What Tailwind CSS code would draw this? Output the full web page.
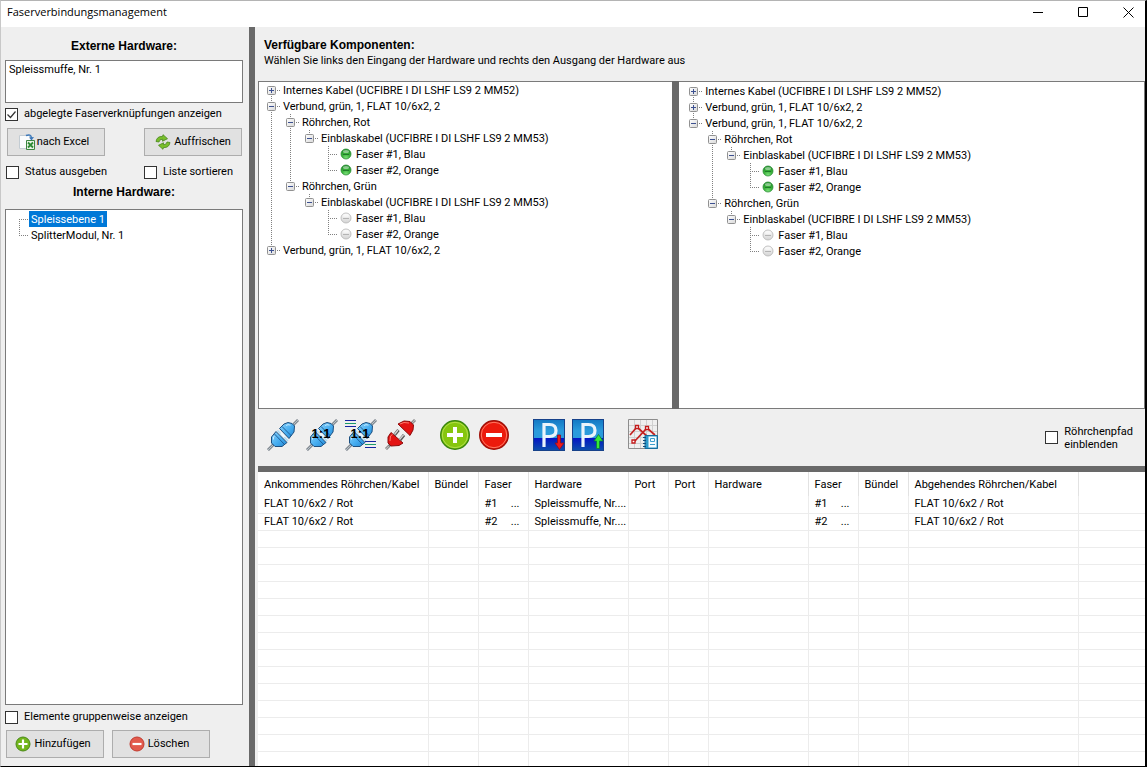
<!DOCTYPE html>
<html lang="de">
<head>
<meta charset="utf-8">
<title>Faserverbindungsmanagement</title>
<script src="https://cdn.jsdelivr.net/npm/@tailwindcss/browser@4"></script>
</head>
<body class="flex h-screen flex-col overflow-hidden border-t border-r-2 border-b border-l border-t-[#b4b4b4] border-r-black border-b-black border-l-[#c8c8c8] bg-[#efefef] font-[Roboto,'Liberation_Sans',sans-serif] text-[11px] leading-4 text-black">

<svg class="absolute size-0" aria-hidden="true">
  <defs>
    <linearGradient id="blue" x1="0" y1="0" x2="1" y2="1"><stop offset="0" stop-color="#8fd4fa"/><stop offset=".55" stop-color="#46adf0"/><stop offset="1" stop-color="#2287d3"/></linearGradient>
    <linearGradient id="sky" x1="0" y1="0" x2="0" y2="1"><stop offset="0" stop-color="#1479c4"/><stop offset=".6" stop-color="#2a9bdc"/></linearGradient>
    <linearGradient id="deep" x1="0" y1="0" x2="0" y2="1"><stop offset="0" stop-color="#0414c4"/><stop offset="1" stop-color="#0b4fae"/></linearGradient>
    <radialGradient id="ballgreen" cx=".5" cy=".9" r=".9"><stop offset="0" stop-color="#7be07b"/><stop offset=".5" stop-color="#37b037"/><stop offset="1" stop-color="#1f8a2c"/></radialGradient>
    <linearGradient id="ballgray" x1="0" y1="0" x2="0" y2="1"><stop offset="0" stop-color="#fafafa"/><stop offset="1" stop-color="#d4d4d4"/></linearGradient>
    <linearGradient id="boxfill" x1="0" y1="0" x2="1" y2="1"><stop offset="0" stop-color="#fff"/><stop offset="1" stop-color="#d8d8d8"/></linearGradient>
    <symbol id="plug" viewBox="0 0 32 32">
      <path d="M24 8 31 1M1 31l7-7" stroke="#5d6670" stroke-width="2.6"/><path d="M26 6l5-5M1 31l5-5" stroke="#b9c2c8" stroke-width="1.2"/>
      <path d="M12.500 9.500 17 5l4-1.500 4 1L27.500 7l-.5 6L22 19.500z" fill="url(#blue)" stroke="#1c4f80"/>
      <path d="M9 12.500 20 23.500 15 27.500l-7 0L4.500 24l0-6z" fill="url(#blue)" stroke="#1c4f80"/>
      <path d="m10.500 11.500 10.500 10.500" stroke="#a9dcf8" stroke-width="1.500"/>
      <path d="m15 7.500 9.500 9.500M7.500 15l9.500 10" stroke="#1d5f9b"/>
      <path d="m14 14 3.500 4" stroke="#eef7fc" stroke-width="2"/>
      <path d="m19 6.500 2-.8 2.500.4M6.500 20.500v-2.500l1-1" stroke="#c6ebff" fill="none"/>
    </symbol>
    <symbol id="redplug" viewBox="0 0 32 32">
      <path d="m26 6 5-5M2 30l5-5" stroke="#777" stroke-width="2.800"/><path d="m28 4 3-3M2 30l3-3" stroke="#bbb" stroke-width="1.300"/>
      <path d="m14 5 6-3 6 .5L29.500 6l-.5 5-3 5.500z" fill="#e31313" stroke="#8d0b0b"/><path d="m16 5 4-1.500 5 .5" stroke="#ff7b6d" fill="none"/>
      <path d="M7 13.500 19 24l-4 2.500-8 .5L4 24l0-6z" fill="#e31313" stroke="#8d0b0b"/><path d="m6 22 .5-5 2-1.500" stroke="#ff7b6d" fill="none"/>
      <path d="m10.500 16 4-5M16 21l4-5" stroke="#555" stroke-width="3"/><path d="m10.500 15.500 3.500-4.500M15.500 20.500l4-4.500" stroke="#d3d3d3" stroke-width="1.400"/>
    </symbol>
    <symbol id="add" viewBox="0 0 32 32">
      <circle cx="16" cy="16" r="14.300" fill="#86c60e" stroke="#3a860f" stroke-width="1.400"/><circle cx="16" cy="16" r="12.700" fill="none" stroke="#b3e04b" stroke-width="1"/>
      <path d="M16 8v16M8 16h16" stroke="#fff" stroke-width="4"/>
    </symbol>
    <symbol id="remove" viewBox="0 0 32 32">
      <circle cx="16" cy="16" r="14.300" fill="#ec1a0c" stroke="#9e1109" stroke-width="1.400"/><circle cx="16" cy="16" r="12.700" fill="none" stroke="#ff7a64" stroke-width="1"/>
      <path d="M8 16h16" stroke="#fff" stroke-width="4"/>
    </symbol>
    <symbol id="park" viewBox="0 0 32 32">
      <path d="M0 0h32v32H0z" fill="#17428a"/><path d="M1 1h30v18H1z" fill="url(#sky)"/><path d="M1 19h30v12H1z" fill="url(#deep)"/>
      <path d="M11 28V5.500h5.500q6.500 0 6.500 6t-6.500 6H11" fill="none" stroke="#eaf4fb" stroke-width="3.200"/>
    </symbol>
  </defs>
</svg>

<header class="flex h-[26px] shrink-0 items-center justify-between bg-white pl-[6px]">
  <h1 class="pb-1 font-['Open_Sans','Noto_Sans',sans-serif] text-[11px]">Faserverbindungsmanagement</h1>
  <div class="flex gap-[13px] pr-px pb-1">
    <button aria-label="Minimieren" class="grid h-5 w-8 place-items-center"><svg width="11" height="11" viewBox="0 0 11 11"><path d="M0 5.500h10" stroke="#000"/></svg></button>
    <button aria-label="Maximieren" class="grid h-5 w-8 place-items-center"><svg width="11" height="11" viewBox="0 0 11 11"><path d="M.5.5h9v9h-9z" fill="none" stroke="#000"/></svg></button>
    <button aria-label="Schließen" class="grid h-5 w-8 place-items-center"><svg width="11" height="11" viewBox="0 0 11 11"><path d="m.5.5 10 10M10.500.5l-10 10" stroke="#000"/></svg></button>
  </div>
</header>

<div class="flex min-h-0 flex-1">
  <aside class="flex w-[248px] shrink-0 flex-col pr-[6px] pb-2 pl-1">
    <h2 class="mt-[11px] text-center font-['Liberation_Sans',Arial,sans-serif] text-[12px] font-bold"><label for="ext">Externe Hardware:</label></h2>
    <textarea id="ext" class="mt-[6px] h-[43px] shrink-0 resize-none border border-[#7a7a7a] bg-white px-[3px] pt-px leading-4 outline-none">Spleissmuffe, Nr. 1</textarea>
    <label class="mt-[3px] flex items-center gap-[6px]"><span class="relative flex"><input type="checkbox" checked class="peer size-[13px] appearance-none border border-[#333] bg-white"><svg class="pointer-events-none absolute inset-0 hidden peer-checked:block" width="13" height="13" viewBox="0 0 13 13"><path d="m2.500 6.500 3 3 5-6" fill="none" stroke="#333" stroke-width="1.200"/></svg></span>abgelegte Faserverknüpfungen anzeigen</label>
    <div class="mt-[6px] flex justify-between pr-px pl-[2px]">
      <button class="flex h-7 w-[98px] items-center justify-center gap-0.5 border border-[#adadad] bg-[#e1e1e1] pr-1"><svg width="16" height="16" viewBox="0 0 16 16"><path d="M.5 1.500h9l3 3v10H.5z" fill="#fafcfd" stroke="#c3ccd3"/><path d="M7 1.500q5-2 5.500 2.500" fill="none" stroke="#3c78b9" stroke-width="1.500"/><path d="m10 3.500 5-.5-2.500 3.500z" fill="#3c78b9"/><path d="M7.500 6.500h8v9h-8z" fill="#e9f4e7" stroke="#3c8540"/><path d="m9 8.500 5 5m0-5-5 5" stroke="#2e8b35" stroke-width="1.800"/></svg>nach Excel</button>
      <button class="flex h-7 w-[98px] items-center justify-center gap-[3px] border border-[#adadad] bg-[#e1e1e1]"><svg width="16" height="16" viewBox="0 0 16 16"><g fill="#79bf2b" stroke="#46851a" stroke-width=".8"><path d="M1 7.500Q2 2 7.500 2.500L8 .7l4.500 4-5 2.500.2-2Q4.500 5 4 8z"/><path d="M15 8.500Q14 14 8.500 13.500L8 15.300l-4.500-4 5-2.500-.2 2Q11.500 11 12 8z"/></g></svg>Auffrischen</button>
    </div>
    <div class="mt-2 flex pl-px">
      <label class="flex w-[138px] items-center gap-[6px]"><input type="checkbox" class="size-[13px] appearance-none border border-[#333] bg-white">Status ausgeben</label>
      <label class="flex items-center gap-[6px]"><input type="checkbox" class="size-[13px] appearance-none border border-[#333] bg-white">Liste sortieren</label>
    </div>
    <h2 class="mt-1 text-center font-['Liberation_Sans',Arial,sans-serif] text-[12px] font-bold">Interne Hardware:</h2>
    <ul role="tree" aria-label="Interne Hardware" data-tree="intern" class="mt-[9px] min-h-0 flex-1 border border-[#7a7a7a] bg-white pt-px pl-1"></ul>
    <label class="mt-1 flex items-center gap-[6px]"><input type="checkbox" class="size-[13px] appearance-none border border-[#333] bg-white">Elemente gruppenweise anzeigen</label>
    <div class="mt-[5px] flex gap-2 pl-px">
      <button class="flex h-7 w-[98px] items-center justify-center gap-[3px] border border-[#adadad] bg-[#e1e1e1] pr-1"><svg width="16" height="16" viewBox="0 0 16 16"><circle cx="8" cy="8" r="7" fill="#72b51c" stroke="#4a8a16"/><path d="M8 3.500v9M3.500 8h9" stroke="#fff" stroke-width="2.200"/></svg>Hinzufügen</button>
      <button class="flex h-7 w-[98px] items-center justify-center gap-[3px] border border-[#adadad] bg-[#e1e1e1] pr-1"><svg width="16" height="16" viewBox="0 0 16 16"><circle cx="8" cy="8" r="7" fill="#e25a4c" stroke="#c23b30"/><path d="M3.500 8h9" stroke="#fff" stroke-width="2.200"/></svg>Löschen</button>
    </div>
  </aside>
  <div class="w-[6px] shrink-0 bg-[#696969]"></div>

  <main class="flex min-w-0 flex-1 flex-col pl-[3px]">
    <div class="h-[54px] shrink-0 pt-[10px] pl-[6px]">
      <h2 class="font-['Liberation_Sans',Arial,sans-serif] text-[12px] font-bold">Verfügbare Komponenten:</h2>
      <p>Wählen Sie links den Eingang der Hardware und rechts den Ausgang der Hardware aus</p>
    </div>
    <div class="flex min-h-0 flex-[328]">
      <ul role="tree" aria-label="Eingang" data-tree="left" class="min-w-0 flex-[415] overflow-hidden border border-r-0 border-[#7a7a7a] bg-white pl-[3px]"></ul>
      <div class="w-[7px] shrink-0 bg-[#696969]"></div>
      <ul role="tree" aria-label="Ausgang" data-tree="right" class="min-w-0 flex-[465] overflow-hidden border-y border-r border-[#7a7a7a] bg-white pt-px pl-[5px]"></ul>
    </div>
    <div class="flex h-[57px] shrink-0 items-center justify-between pr-3 pb-[6px] pl-[9px]">
      <div role="toolbar" aria-label="Verbindungen" class="flex gap-[23px]">
        <div class="flex gap-[7px]">
          <button aria-label="Verbinden"><svg width="32" height="32"><use href="#plug"/></svg></button>
          <button aria-label="1:1 verbinden"><svg width="32" height="32"><use href="#plug"/><text x="15" y="19" text-anchor="middle" class="font-['Liberation_Sans',Arial,sans-serif] text-[13px] font-bold">1:1</text></svg></button>
          <button aria-label="Alle 1:1 verbinden"><svg width="32" height="32"><use href="#plug"/><path d="M0 1.500h11M0 7.500h11M20 22.500h11M20 28.500h11" stroke="#1626a0"/><path d="M0 4.500h11M20 25.500h11" stroke="#1b9a6a"/><text x="15" y="19" text-anchor="middle" class="font-['Liberation_Sans',Arial,sans-serif] text-[13px] font-bold">1:1</text></svg></button>
          <button aria-label="Trennen"><svg width="32" height="32"><use href="#redplug"/></svg></button>
        </div>
        <div class="flex gap-[7px]">
          <button aria-label="Hinzufügen"><svg width="32" height="32"><use href="#add"/></svg></button>
          <button aria-label="Entfernen"><svg width="32" height="32"><use href="#remove"/></svg></button>
        </div>
        <div class="flex gap-[7px]">
          <button aria-label="Parken"><svg width="32" height="32"><use href="#park"/><path d="M24.500 16h3v8H31l-4.500 6.500L22 24h2.500z" fill="#f01818" stroke="#8a0c20" stroke-width=".8"/></svg></button>
          <button aria-label="Ausparken"><svg width="32" height="32"><use href="#park"/><path d="M24.500 29.500h3V22H31l-4.500-6.500L22 22h2.500z" fill="#35ea35" stroke="#0b7a3b" stroke-width=".8"/></svg></button>
        </div>
        <button aria-label="Diagramm"><svg width="32" height="32" viewBox="0 0 32 32"><path d="M1.500.5h29v29h-29z" fill="#efefef" stroke="#8d8d8d"/><path d="M7.500 1v28M13.500 1v28M19.500 1v28M25.500 1v28M2 6.500h28M2 12.500h28M2 18.500h28M2 24.500h28" stroke="#d0d0d0"/><path d="m3 16 7-8 12 11M7 23 20 9l8 7" fill="none" stroke="#c32222" stroke-width="1.700"/><path d="M8.500 6.500h3v3h-3zM18.500 7.500h3v3h-3zM5 21h3v3H5z" fill="#fff" stroke="#c31a1a" stroke-width="1.300"/><path d="M18 16.500h12.500v13H18z" fill="#2d9acb" stroke="#176c9c"/><path d="M21.500 17.500h8v11h-8z" fill="#f5fbfe"/><path d="M23.500 19.500h4v3h-4zM23 25.500h5" fill="none" stroke="#3c9fce"/><path d="M16 18.500h3M16 21.500h3M16 24.500h3M16 27.500h3" stroke="#124d7c"/></svg></button>
      </div>
      <label class="flex items-center gap-[6px] pt-[6px] leading-[13px]"><input type="checkbox" class="size-[13px] appearance-none border border-[#333] bg-white"><span>Röhrchenpfad<br>einblenden</span></label>
    </div>
    <div class="h-[6px] shrink-0 bg-[#696969]"></div>
    <div class="min-h-0 flex-[294] overflow-hidden bg-white">
      <table class="w-full table-fixed border-collapse text-left">
        <colgroup><col class="w-[170px]"><col class="w-[50px]"><col class="w-[50px]"><col class="w-[100px]"><col class="w-[40px]"><col class="w-[40px]"><col class="w-[100px]"><col class="w-[50px]"><col class="w-[50px]"><col class="w-[170px]"><col></colgroup>
        <thead><tr id="head" class="h-6"></tr></thead>
        <tbody id="rows"></tbody>
      </table>
    </div>
  </main>
</div>

<script>
// Guide cell of a tree row: dotted connectors and an optional expander box.
function guide(up, down, right, box) {
  let d = '';
  if (up) d += 'M9.500 0V8';
  if (down) d += 'M9.500 8V16';
  if (right) d += 'M9 8.500H19';
  let s = `<svg class="shrink-0" width="19" height="16" viewBox="0 0 19 16"><path d="${d}" stroke="#808080" stroke-dasharray="1 1" fill="none"/>`;
  if (box) s += `<rect x="5.500" y="4.500" width="8" height="8" rx="1" fill="url(#boxfill)" stroke="#919191"/><path d="M7 8.500h5${box === '+' ? 'M9.500 6v5' : ''}" stroke="#3c5090"/>`;
  return s + '</svg>';
}
const ball = on => `<svg class="ml-0.5 mr-0.5 shrink-0" width="12" height="12" viewBox="0 0 12 12"><circle cx="6" cy="6" r="5" fill="url(#${on ? 'ballgreen' : 'ballgray'})" stroke="${on ? '#2c8f35' : '#b4b4b4'}" stroke-width=".8"/><path d="M3 6.500h6" stroke="${on ? '#1f7a2a' : '#b4b4b4'}"/><ellipse cx="6" cy="3.500" rx="3" ry="1.500" fill="#fff" opacity=".45"/></svg>`;

const fibres = on => [{ t: 'Faser #1, Blau', ball: on }, { t: 'Faser #2, Orange', ball: on }];
const tube = (name, on) => ({ t: 'Röhrchen, ' + name, kids: [{ t: 'Einblaskabel (UCFIBRE I DI LSHF LS9 2 MM53)', kids: fibres(on) }] });
const cable = { t: 'Internes Kabel (UCFIBRE I DI LSHF LS9 2 MM52)', closed: true };
const closedBundle = { t: 'Verbund, grün, 1, FLAT 10/6x2, 2', closed: true };
const openBundle = { t: 'Verbund, grün, 1, FLAT 10/6x2, 2', kids: [tube('Rot', true), tube('Grün', false)] };
const trees = {
  intern: [{ t: 'Spleissebene 1', selected: true }, { t: 'SplitterModul, Nr. 1' }],
  left: [cable, openBundle, closedBundle],
  right: [cable, closedBundle, openBundle]
};

function render(nodes, prefix, depth) {
  return nodes.map((n, i) => {
    const last = i === nodes.length - 1;
    const box = n.closed ? '+' : n.kids ? '-' : '';
    const label = n.selected ? '<span class="h-4 bg-[#0078d7] px-0.5 leading-[18px] text-white">' + n.t + '</span>' : '<span class="h-4 px-0.5 leading-[18px]">' + n.t + '</span>';
    const row = `<div class="flex h-4 items-center whitespace-nowrap">${prefix}${guide(depth > 0 || i > 0, !last, true, box)}${'ball' in n ? ball(n.ball) : ''}${label}</div>`;
    const kids = n.kids ? '<ul role="group">' + render(n.kids, prefix + guide(!last, !last, false, ''), depth + 1) + '</ul>' : '';
    return `<li role="treeitem">${row}${kids}</li>`;
  }).join('');
}
document.querySelectorAll('[data-tree]').forEach(el => { el.innerHTML = render(trees[el.dataset.tree], '', 0); });

const heads = ['Ankommendes Röhrchen/Kabel', 'Bündel', 'Faser', 'Hardware', 'Port', 'Port', 'Hardware', 'Faser', 'Bündel', 'Abgehendes Röhrchen/Kabel', ''];
document.getElementById('head').innerHTML = heads.map(h => `<th scope="col" class="border-r border-[#e2e2e2] pt-0.5 pl-[6px] font-normal whitespace-nowrap last:border-r-0">${h}</th>`).join('');
const fibre = n => `<span class="flex justify-between pr-2"><span>#${n}</span><span>...</span></span>`;
const data = [1, 2].map(n => ['FLAT 10/6x2 / Rot', '', fibre(n), 'Spleissmuffe, Nr....', '', '', '', fibre(n), '', 'FLAT 10/6x2 / Rot', '']);
while (data.length < 17) data.push(Array(11).fill(''));
document.getElementById('rows').innerHTML = data.map(r => '<tr class="h-[17px]">' + r.map(c => `<td class="overflow-hidden border-r border-b border-[#ececec] p-0 pl-[6px] whitespace-nowrap last:border-r-0">${c}</td>`).join('') + '</tr>').join('');
</script>
</body>
</html>
